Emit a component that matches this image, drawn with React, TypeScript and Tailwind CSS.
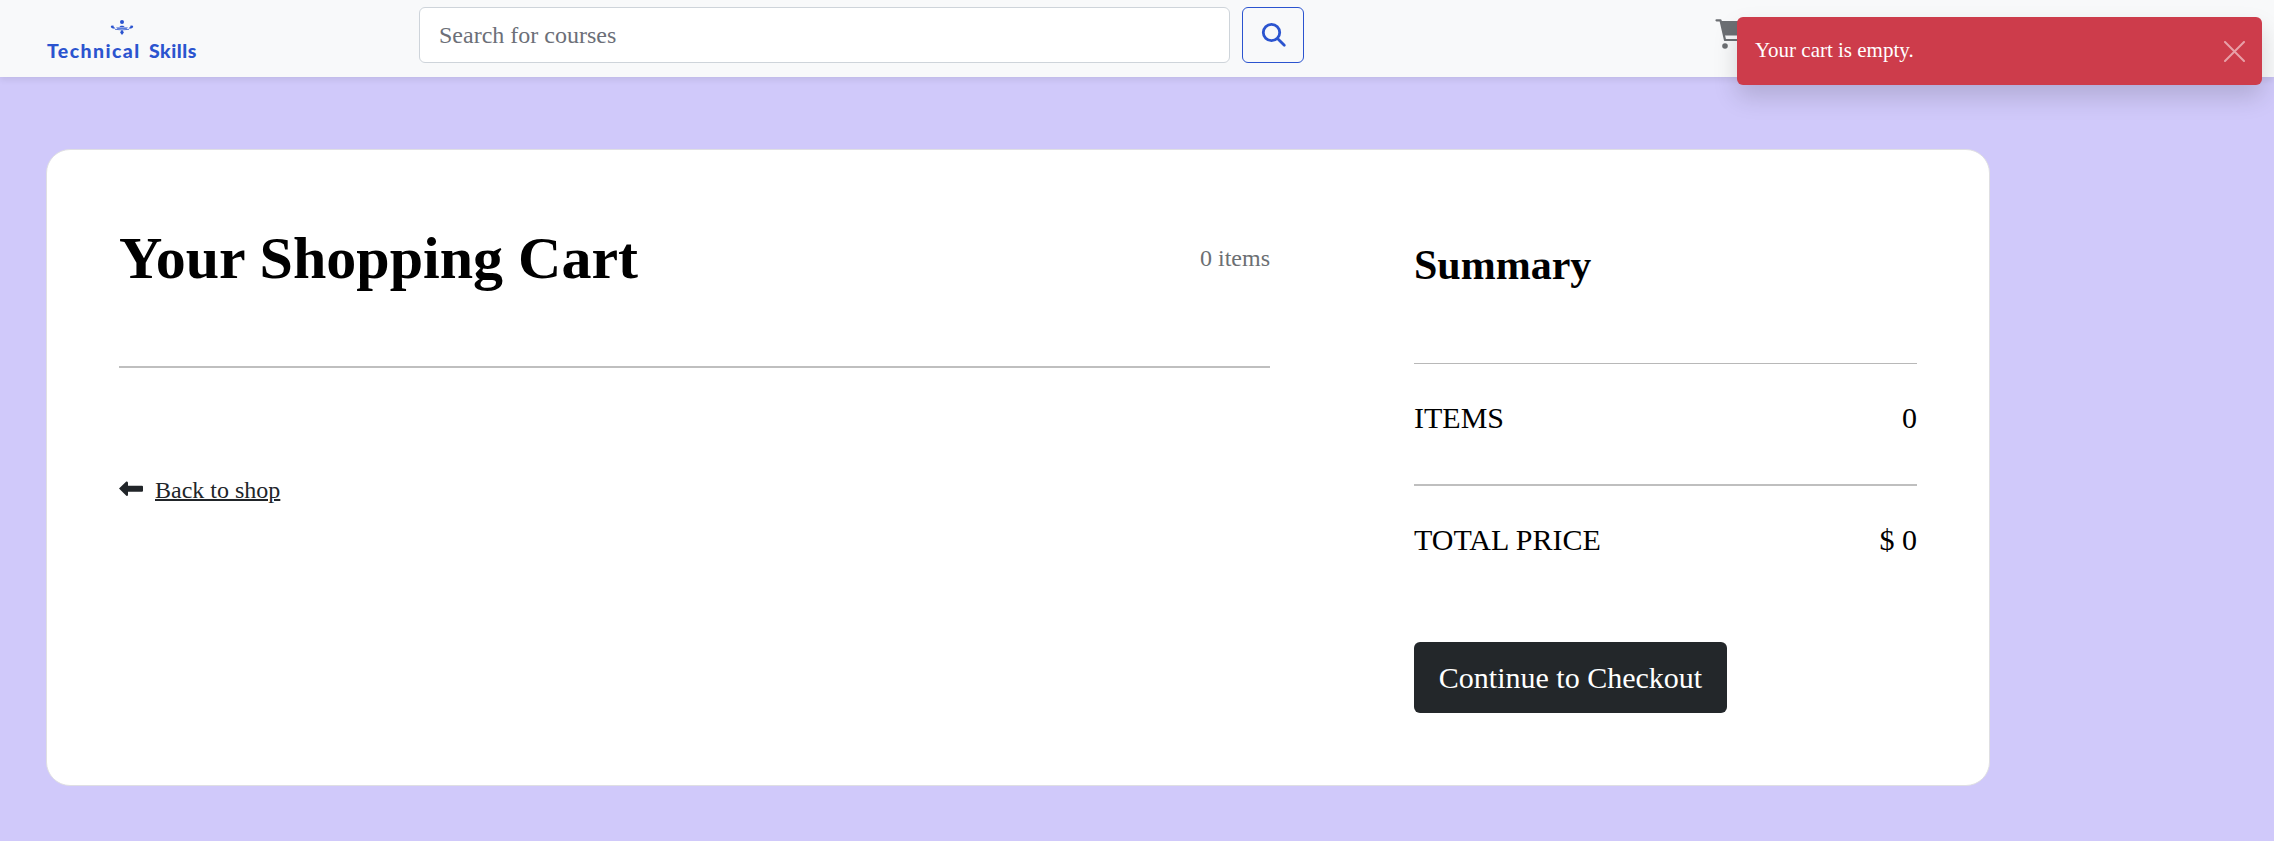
import React from "react";

const FONT = "font-['Liberation_Serif',serif]";

function Logo() {
  return (
    <div className="flex w-[150px] flex-col items-center pt-[19px] text-[#2b54cf]">
      <svg width="24" height="17" viewBox="0 0 24 17" fill="currentColor">
        <circle cx="12" cy="3" r="2" />
        <path d="M10.100 13.600l1.300-2.300h1.200l1.300 2.300-1.900 2.400z" />
        <path d="M9.300 8L10.800 6.800h2.400L14.700 8zM6 8.500h12l-1.500 1.300H7.500z" />
        <path d="M3.800 6.800L2 6.500Q.4 6.900.9 8.200 1.500 9.200 4.500 9.800L5 8.700Q2.800 8.200 3.800 6.800zM20.200 6.800l1.800-.3q1.600.4 1.100 1.700-.6 1-3.600 1.600L19 8.700q2.200-.5 1.200-1.900z" />
        <path d="M5 10.300q7 1.200 14 0" fill="none" stroke="currentColor" strokeWidth="0.800" />
      </svg>
      <div className="mt-[3px] flex h-6 w-[150px] items-center whitespace-nowrap font-['Lato',sans-serif] text-[19.5px] font-black leading-6">
        <span className="w-[102px] tracking-[1.4px]">Technical</span>
        <span className="tracking-[0.5px]">Skills</span>
      </div>
    </div>
  );
}

function Header() {
  return (
    <header className="relative flex h-[77px] items-start bg-[#f8f9fa] pl-[47px] shadow-[0_3px_6px_rgba(0,0,0,0.075)]">
      <Logo />
      <div className="ml-[222px] flex gap-3 pt-[7px]">
        <input
          placeholder="Search for courses"
          className="h-14 w-[811px] rounded-md border border-[#ced4da] bg-white px-[19px] text-2xl placeholder:text-[#6c6f78]"
        />
        <button aria-label="Search" className="flex h-14 w-[62px] items-center justify-center rounded-md border border-[#2b54cf] pl-px text-[#2b54cf]">
          <svg width="26" height="26" viewBox="0 0 26 26" fill="none" stroke="currentColor" strokeWidth="2.800" strokeLinecap="round">
            <circle cx="10.500" cy="10.500" r="8.200" />
            <path d="M17 17l6.300 6.300" />
          </svg>
        </button>
      </div>
      <svg className="ml-[411px] mt-[18px] text-[#6c6f73]" width="34" height="32" viewBox="0 0 34 32" fill="none" stroke="currentColor" strokeWidth="2.200" strokeLinecap="round" strokeLinejoin="round">
        <path d="M1.500 2.300h4L10 22h20" />
        <path d="M6 3h25l-3 14.500H9z" fill="currentColor" stroke="none" />
        <circle cx="10" cy="28" r="2.800" fill="currentColor" stroke="none" />
        <circle cx="28" cy="28" r="2.800" fill="currentColor" stroke="none" />
      </svg>
    </header>
  );
}

function Toast() {
  return (
    <div className="absolute right-3 top-[17px] flex h-[68px] w-[525px] items-center justify-between rounded-md bg-[#cd3c4b] pl-[18px] pr-[17px] text-[21px] text-white shadow-[0_12px_24px_rgba(0,0,0,0.15)]">
      <span>Your cart is empty.</span>
      <svg width="21" height="21" viewBox="0 0 21 21" stroke="#e8a0a8" strokeWidth="2" strokeLinecap="round">
        <path d="M1 1l19 19M20 1L1 20" />
      </svg>
    </div>
  );
}

function Row({ label, value }: { label: string; value: string }) {
  return (
    <div className="flex justify-between text-[30px] leading-9">
      <span>{label}</span>
      <span>{value}</span>
    </div>
  );
}

export default function App() {
  return (
    <div className={`relative h-[841px] overflow-hidden bg-[#d0c9fa] text-black ${FONT}`}>
      <Header />
      <main className="ml-[46px] mt-[72px] flex h-[637px] w-[1944px] rounded-3xl border border-[#dfdfe3] bg-white">
        <section className="w-[1295px] px-[72px] pt-[72px]">
          <div className="flex items-center justify-between">
            <h1 className="text-[60px] font-bold leading-[72px]">Your Shopping Cart</h1>
            <span className="text-2xl leading-9 text-[#6c6f73]">0 items</span>
          </div>
          <div className="mt-[72px] h-0.5 bg-[#bfbfbf]" />
          <a href="#" className="mt-[104px] flex items-center text-2xl leading-9 text-[#212529]">
            <svg className="-mt-0.5" width="24" height="16" viewBox="0 0 24 16" fill="currentColor">
              <path d="M0 7.500L7.300.6Q9 0 9 2v2.700h14q1 0 1 1v4q0 1-1 1H9v2.700q0 2-1.700 1.400z" />
            </svg>
            <span className="ml-3 underline decoration-2">Back to shop</span>
          </a>
        </section>
        <section className="flex-1 pl-[72px] pr-[72px] pt-[90px]">
          <h2 className="text-[42px] font-bold leading-[50px]">Summary</h2>
          <div className="mt-[73px] h-px bg-[#b8b8b8]" />
          <div className="mt-[36px]"><Row label="ITEMS" value="0" /></div>
          <div className="mt-[48px] h-0.5 bg-[#bfbfbf]" />
          <div className="mt-[36px]"><Row label="TOTAL PRICE" value="$ 0" /></div>
          <button className="mt-[84px] h-[71px] w-[313px] rounded-md bg-[#23272a] text-[30px] text-white">
            Continue to Checkout
          </button>
        </section>
      </main>
      <Toast />
    </div>
  );
}
